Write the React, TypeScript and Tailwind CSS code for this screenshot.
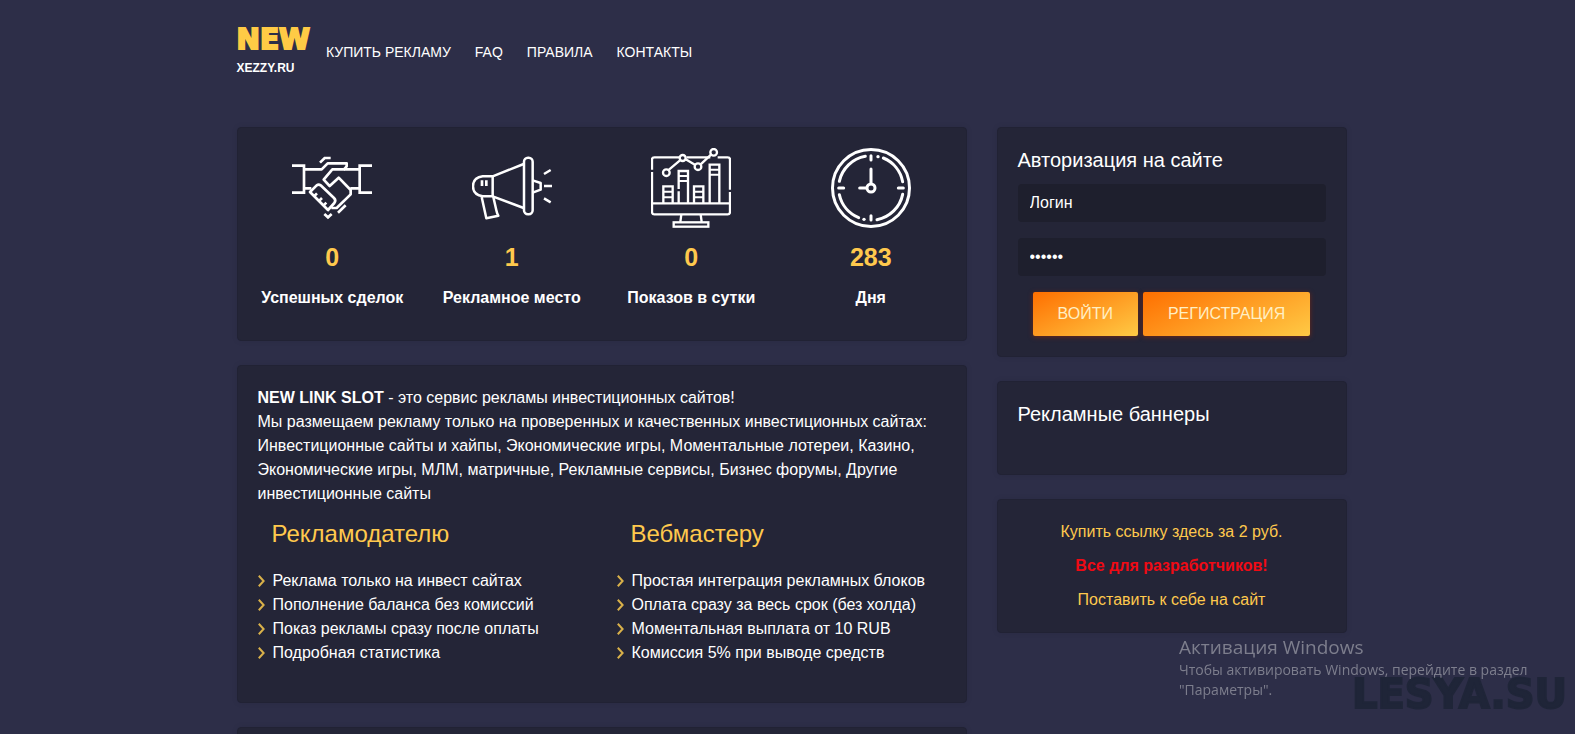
import React from "react";

const navLinks = ["КУПИТЬ РЕКЛАМУ", "FAQ", "ПРАВИЛА", "КОНТАКТЫ"];

const advertiserPoints = [
  "Реклама только на инвест сайтах",
  "Пополнение баланса без комиссий",
  "Показ рекламы сразу после оплаты",
  "Подробная статистика",
];

const webmasterPoints = [
  "Простая интеграция рекламных блоков",
  "Оплата сразу за весь срок (без холда)",
  "Моментальная выплата от 10 RUB",
  "Комиссия 5% при выводе средств",
];

function HandshakeIcon() {
  return (
    <svg viewBox="36 9 240 240" className="size-20" fill="none" stroke="white" strokeWidth="8" aria-hidden="true">
      <path d="M36 62H72V143H36M276 62H239V143H276" />
      <path d="M72 73H125L143 55H200V64L192 73H157L131 104L149 123L176 98L212 135V148L170 189H154" strokeLinejoin="round" />
      <path d="M192 73H239M211 130H239M72 130H94" />
      <path d="M90 141L110 121Q116 117 122 121L162 159Q169 166 163 174L144 195Z" strokeLinejoin="round" />
      <path d="M103 153L111 145M118 167L126 159M131 181L139 173" />
      <path d="M120 53L134 39H152M174 203L197 181M133 207L144 217L155 207" />
    </svg>
  );
}

function MegaphoneIcon() {
  return (
    <svg viewBox="30 9 240 240" className="size-20" fill="none" stroke="white" strokeWidth="7.5" strokeLinejoin="round" aria-hidden="true">
      <path d="M92 94H62Q33 98 33 124Q33 150 62 154H92Z" />
      <path d="M92 94L185 57M92 154L185 189" />
      <rect x="186" y="38" width="26" height="170" rx="12" />
      <path d="M212 106L236 114V134L212 143" />
      <path d="M59 156L73 220L109 212Q105 206 103 196L94 156" />
      <path d="M60 106V123M73 106V123" strokeWidth="8" />
      <path d="M246 87L266 75M246 123H270M246 160L266 172" />
    </svg>
  );
}

function ChartIcon() {
  return (
    <svg viewBox="27 9 240 240" className="size-20" fill="none" stroke="white" strokeWidth="7" aria-hidden="true">
      <path d="M30 74V44Q30 37 37 37H112M134 37H205M227 37H257Q264 37 264 44V134M264 141V200Q264 208 257 208H37Q30 208 30 200V81M30 175H264" />
      <path d="M64 175V124H92V175M110 132V78H138V175M110 139V175M156 175V124H184V175M203 175V59H232V175" />
      <path d="M64 140H92M64 157H92M110 93H138M110 108H138M156 140H184M156 157H184M203 74H232M203 89H232" strokeWidth="6" />
      <path d="M81 74L114 46M131 43L160 60M176 58L207 29" />
      <circle cx="73" cy="83" r="10" />
      <circle cx="122" cy="39" r="9" />
      <circle cx="168" cy="65" r="10" />
      <circle cx="215" cy="22" r="10" />
      <path d="M118 208L115 231M176 208L179 231" />
      <rect x="95" y="232" width="104" height="13" />
    </svg>
  );
}

function ClockIcon() {
  return (
    <svg viewBox="27 9 240 240" className="size-20" fill="none" stroke="white" strokeWidth="9" strokeLinecap="round" aria-hidden="true">
      <circle cx="147" cy="129" r="115.5" />
      <path d="M52 109A97 97 0 0 1 130 34M184 39A97 97 0 0 1 242 110M242 148A97 97 0 0 1 165 224M110 218A97 97 0 0 1 52 149" />
      <path d="M147 32V45M147 212V225M50 129H65M229 129H244" />
      <path d="M147 72V116M113 129H134" />
      <circle cx="147" cy="129" r="12" />
      <circle cx="168" cy="35" r="5" fill="white" stroke="none" />
      <circle cx="126" cy="223" r="5" fill="white" stroke="none" />
    </svg>
  );
}

const stats = [
  { value: "0", label: "Успешных сделок", Icon: HandshakeIcon },
  { value: "1", label: "Рекламное место", Icon: MegaphoneIcon },
  { value: "0", label: "Показов в сутки", Icon: ChartIcon },
  { value: "283", label: "Дня", Icon: ClockIcon },
];

function Card({ children }: { children?: React.ReactNode }) {
  return (
    <section className="rounded border border-[#212234] bg-[#242537] p-5 shadow-[0_0_6px_rgba(0,0,0,0.08)]">
      {children}
    </section>
  );
}

function PointList({ title, items }: { title: string; items: string[] }) {
  return (
    <div>
      <h2 className="px-3.5 text-2xl leading-7 text-[#ffc94d]">{title}</h2>
      <ul className="mt-[21px]">
        {items.map((item) => (
          <li key={item} className="flex items-center gap-2 leading-6">
            <svg viewBox="0 0 7 12" className="h-3 w-[7px] shrink-0" fill="none" stroke="#d9b14a" strokeWidth="2" aria-hidden="true">
              <path d="M0.8 0.8L5.6 6L0.8 11.2" />
            </svg>
            {item}
          </li>
        ))}
      </ul>
    </div>
  );
}

const inputClass =
  "block h-[38px] w-full rounded-sm bg-[#1e1f2d] px-3 text-base text-white placeholder:text-white outline-none";
const buttonClass =
  "h-11 cursor-pointer rounded-xs bg-[linear-gradient(155deg,#ff6f00,#ffca45)] px-[25px] text-base text-[#ffefc4] shadow-[0_1px_5px_rgba(160,40,0,0.6)]";

export default function App() {
  return (
    <div className="min-h-screen bg-[#2d2e48] pl-2 font-['Liberation_Sans',Arial,sans-serif] text-base text-white">
      <div className="mx-auto max-w-[1110px]">
        <header className="flex h-[103px] items-center gap-4">
          <a href="#" className="block">
            <span className="block font-['DejaVu_Sans',sans-serif] text-[28px] leading-8 font-bold text-[#ffcb45] [-webkit-text-stroke:2px_#ffcb45]">
              NEW
            </span>
            <span className="block text-xs leading-6 font-bold">XEZZY.RU</span>
          </a>
          <nav className="flex gap-6 text-sm">
            {navLinks.map((link) => (
              <a key={link} href="#">
                {link}
              </a>
            ))}
          </nav>
        </header>

        <main className="mt-6 grid grid-cols-1 items-start gap-x-[30px] gap-y-6 lg:grid-cols-3">
          <div className="flex flex-col gap-6 lg:col-span-2">
            <Card>
              <div className="-mx-[15px] grid grid-cols-2 pb-2.5 sm:grid-cols-4">
                {stats.map(({ value, label, Icon }) => (
                  <div key={label} className="flex flex-col items-center text-center font-bold">
                    <Icon />
                    <p className="mt-3.5 text-[25px] leading-[30px] text-[#ffc94d]">{value}</p>
                    <p className="mt-3.5 leading-6">{label}</p>
                  </div>
                ))}
              </div>
            </Card>

            <Card>
              <p className="leading-6">
                <b>NEW LINK SLOT</b> - это сервис рекламы инвестиционных сайтов!
                <br />
                Мы размещаем рекламу только на проверенных и качественных инвестиционных сайтах:
                Инвестиционные сайты и хайпы, Экономические игры, Моментальные лотереи, Казино,
                Экономические игры, МЛМ, матричные, Рекламные сервисы, Бизнес форумы, Другие
                инвестиционные сайты
              </p>
              <div className="mt-3.5 grid gap-x-[30px] pb-[17px] sm:grid-cols-2">
                <PointList title="Рекламодателю" items={advertiserPoints} />
                <PointList title="Вебмастеру" items={webmasterPoints} />
              </div>
            </Card>

            <Card />
          </div>

          <aside className="flex flex-col gap-6">
            <Card>
              <h2 className="text-xl leading-6">Авторизация на сайте</h2>
              <form className="mt-3 flex flex-col gap-4" onSubmit={(e) => e.preventDefault()}>
                <input type="text" aria-label="Логин" placeholder="Логин" className={inputClass} />
                <input type="password" aria-label="Пароль" defaultValue="123456" className={inputClass} />
                <div className="flex justify-center gap-[5px]">
                  <button type="submit" className={buttonClass}>ВОЙТИ</button>
                  <button type="button" className={buttonClass}>РЕГИСТРАЦИЯ</button>
                </div>
              </form>
            </Card>

            <Card>
              <h2 className="pb-7 text-xl leading-6">Рекламные баннеры</h2>
            </Card>

            <Card>
              <div className="flex flex-col items-center gap-2.5 leading-6 text-[#ffc94d]">
                <a href="#">Купить ссылку здесь за 2 руб.</a>
                <a href="#" className="font-bold text-[#f00a14]">Все для разработчиков!</a>
                <a href="#">Поставить к себе на сайт</a>
              </div>
            </Card>
          </aside>
        </main>
      </div>

      <div className="pointer-events-none fixed right-2 bottom-[26px] font-['DejaVu_Sans',sans-serif] text-[40px] leading-7 font-bold text-[#1f2538] [-webkit-text-stroke:2px_#1f2538]">
        LESYA.SU
      </div>
      <div className="pointer-events-none fixed right-[30px] bottom-[34px] w-[366px] font-['Open_Sans','Noto_Sans',sans-serif] text-sm leading-5 text-[#7d7e8d]">
        <p className="text-[19px] leading-[26px]">Активация Windows</p>
        <p>
          Чтобы активировать Windows, перейдите в раздел
          <br />
          "Параметры".
        </p>
      </div>
    </div>
  );
}
